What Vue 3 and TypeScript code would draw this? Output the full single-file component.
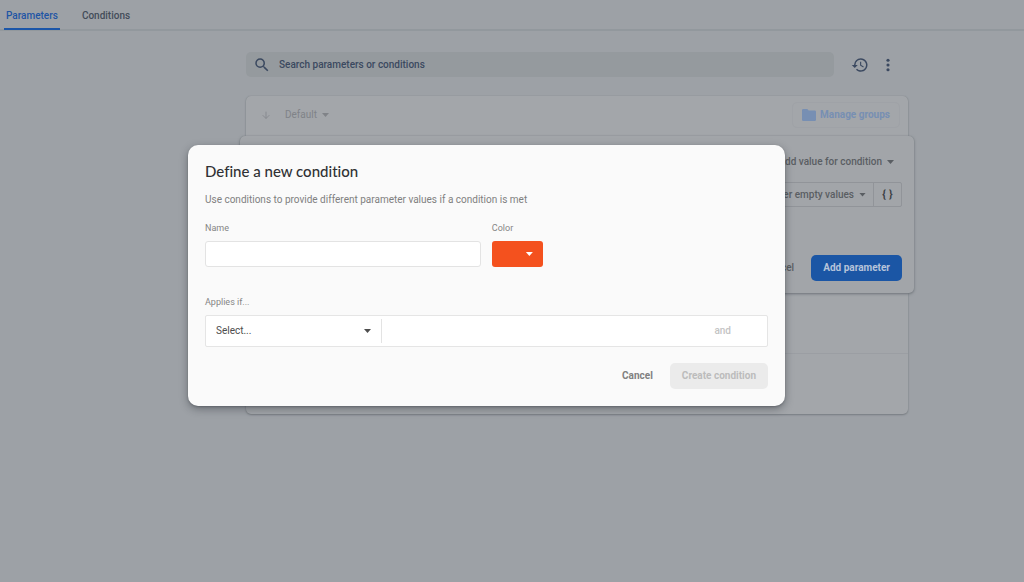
<script setup lang="ts">
import { ref } from 'vue'

const tabs = ['Parameters', 'Conditions']
const activeTab = ref('Parameters')
const search = ref('')
const name = ref('')
const subject = ref('')
</script>

<template>
  <div class="page">
    <nav class="tabs">
      <button
        v-for="tab in tabs"
        :key="tab"
        class="tab"
        :class="{ active: tab === activeTab }"
        type="button"
        @click="activeTab = tab"
      >{{ tab }}</button>
    </nav>

    <main class="content">
      <div class="toolbar">
        <label class="search">
          <svg viewBox="0 0 24 24" width="18" height="18" aria-hidden="true">
            <path d="M15.5 14h-.79l-.28-.27A6.47 6.47 0 0 0 16 9.5 6.5 6.5 0 1 0 9.5 16c1.61 0 3.09-.59 4.23-1.57l.27.28v.79l5 4.99L20.49 19l-4.99-5zm-6 0C7.01 14 5 11.99 5 9.5S7.01 5 9.5 5 14 7.01 14 9.5 11.99 14 9.5 14z" />
          </svg>
          <input v-model="search" type="text" placeholder="Search parameters or conditions" aria-label="Search parameters or conditions" />
        </label>
        <button class="icon-button" type="button" aria-label="History">
          <svg viewBox="0 0 24 24" width="18" height="18" aria-hidden="true">
            <path d="M13 3a9 9 0 0 0-9 9H1l4 4 4-4H6a7 7 0 1 1 2.050 4.950l-1.420 1.420A9 9 0 1 0 13 3zM12.100 7.500v5.200l4.200 2.500.75-1.230-3.450-2.050V7.500z" />
          </svg>
        </button>
        <button class="icon-button" type="button" aria-label="More options">
          <svg viewBox="0 0 24 24" width="18" height="18" aria-hidden="true">
            <circle cx="12" cy="5.700" r="2.100" /><circle cx="12" cy="12" r="2.100" /><circle cx="12" cy="18.300" r="2.100" />
          </svg>
        </button>
      </div>

      <section class="list">
        <header class="list-head">
          <svg class="sort-icon" viewBox="0 0 12 12" width="10" height="10" aria-hidden="true">
            <path d="M6 2v8M2 6.200l4 4 4-4" />
          </svg>
          <button class="plain faded" type="button">Default <span class="caret"></span></button>
          <button class="manage" type="button">
            <svg viewBox="0 0 14 12" width="14" height="12" aria-hidden="true">
              <path d="M1.300 0h4l1.400 1.500h6A1.300 1.300 0 0 1 14 2.800v7.900a1.300 1.300 0 0 1-1.300 1.300H1.300A1.300 1.300 0 0 1 0 10.700V1.300A1.300 1.300 0 0 1 1.300 0z" />
            </svg>
            Manage groups
          </button>
        </header>

        <div class="editor">
          <button class="plain" type="button">Add value for condition <span class="caret"></span></button>
          <div class="value-row">
            <button class="plain" type="button">Other empty values <span class="caret"></span></button>
            <button class="braces" type="button" aria-label="Edit JSON"><span>{</span><span>}</span></button>
          </div>
          <div class="editor-actions">
            <button class="plain" type="button">Cancel</button>
            <button class="primary" type="button">Add parameter</button>
          </div>
        </div>
        <div class="row"></div>
        <div class="row"></div>
      </section>
    </main>

    <div class="overlay">
      <form class="dialog" role="dialog" aria-labelledby="dialog-title" @submit.prevent>
        <h2 id="dialog-title">Define a new condition</h2>
        <p class="hint">Use conditions to provide different parameter values if a condition is met</p>
        <div class="fields">
          <div class="field name-field">
            <label for="condition-name">Name</label>
            <input id="condition-name" v-model="name" type="text" />
          </div>
          <div class="field">
            <label for="condition-color">Color</label>
            <button id="condition-color" class="swatch" type="button"><span class="caret"></span></button>
          </div>
        </div>
        <label class="applies" for="condition-subject">Applies if...</label>
        <div class="rule">
          <div class="select-wrap">
            <select id="condition-subject" v-model="subject">
              <option value="">Select...</option>
            </select>
            <span class="caret"></span>
          </div>
          <button class="and" type="button" disabled>and</button>
        </div>
        <div class="dialog-actions">
          <button class="cancel" type="button">Cancel</button>
          <button class="create" type="submit" disabled>Create condition</button>
        </div>
      </form>
    </div>
  </div>
</template>

<style>
body {
  background: #9da1a6;
}
</style>

<style scoped>
.page {
  min-height: 100vh;
  color: #5a5e63;
  font: 500 10px/14px Roboto, sans-serif;
}
.page *, .page {
  box-sizing: border-box;
}
button, input, select {
  margin: 0;
  padding: 0;
  border: 0;
  background: none;
  color: inherit;
  font: inherit;
  outline: none;
}
svg {
  flex: none;
  fill: currentColor;
}
.caret {
  flex: none;
  width: 7px;
  height: 4px;
  background: currentColor;
  clip-path: polygon(0 0, 100% 0, 50% 100%);
}
.tabs {
  display: flex;
  gap: 20px;
  height: 31px;
  padding: 0 4px;
  border-bottom: 2px solid #92989d;
  color: #434c59;
}
.tab {
  height: 30px;
  padding: 4px 2px 0;
  border-bottom: 2px solid transparent;
}
.tab.active {
  color: #1f55a5;
  border-color: #1c56a8;
}
.content {
  max-width: 908px;
  padding: 21px 0 0 246px;
}
.toolbar {
  display: flex;
  align-items: center;
  gap: 10px;
  padding-right: 11px;
  color: #3b4960;
}
.search {
  display: flex;
  flex: 1;
  align-items: center;
  gap: 8px;
  height: 25px;
  margin-right: 7px;
  padding: 0 7px;
  border-radius: 5px;
  background: #959a9e;
}
.search input {
  flex: 1;
}
.search input::placeholder {
  color: #3b4960;
  opacity: 1;
}
.icon-button {
  display: flex;
  align-items: center;
  justify-content: center;
  width: 18px;
  height: 18px;
}
.list {
  margin-top: 19px;
  border-radius: 5px;
  background: #a3a6aa;
  box-shadow: 0 1px 2px #777c81, 0 0 1px #7c8186;
}
.list-head {
  display: flex;
  align-items: center;
  height: 40px;
  padding: 0 8px 2px 15px;
}
.sort-icon {
  margin-right: 14px;
  fill: none;
  stroke: #83868b;
}
.plain {
  display: inline-flex;
  align-items: center;
  gap: 5px;
}
.faded {
  color: #808388;
  font-weight: 400;
}
.manage {
  display: flex;
  align-items: center;
  gap: 4px;
  height: 26px;
  margin-left: auto;
  padding: 0 9px;
  border: 1px solid #9fa2a7;
  border-radius: 5px;
  color: #778fb3;
  font-weight: 700;
}
.editor {
  display: flex;
  flex-direction: column;
  align-items: flex-end;
  margin: 0 -6px;
  padding: 19px 12px 12px;
  border-radius: 5px;
  background: #a2a5a9;
  box-shadow: 0 1px 3px #6e7379, 0 0 1px #7c8186;
}
.editor > .plain {
  margin-right: 8px;
}
.value-row {
  display: flex;
  width: 100%;
  height: 25px;
  margin-top: 13px;
  border: 1px solid #919499;
  border-radius: 2px;
  justify-content: flex-end;
}
.value-row .plain {
  padding-right: 7px;
}
.braces {
  display: flex;
  align-items: center;
  justify-content: center;
  gap: 3px;
  width: 28px;
  border-left: 1px solid #919499;
  color: #3c4045;
  font-size: 11px;
  font-weight: 700;
}
.editor-actions {
  display: flex;
  gap: 17px;
  margin-top: 48px;
}
.primary {
  height: 26px;
  padding: 0 12px;
  border-radius: 5px;
  background: #1b56a5;
  color: #b6c4da;
  font-weight: 700;
}
.row {
  height: 60px;
}
.row + .row {
  height: 61px;
  border-top: 1px solid #9b9ea3;
}
.overlay {
  position: absolute;
  inset: 0;
  padding: 145px 239px 0 188px;
}
.dialog {
  padding: 16px 17px 17px;
  border-radius: 10px;
  background: #fafafa;
  color: #4d4d4d;
  box-shadow: 0 3px 8px rgb(30 35 42 / 40%), 0 1px 2px rgb(30 35 42 / 25%);
}
h2 {
  margin: 0;
  color: #303134;
  font: 500 15px/20px Lato, sans-serif;
  font-variant-ligatures: none;
}
.hint {
  margin: 12px 0 14px;
  color: #808080;
  font-weight: 400;
}
.fields {
  display: flex;
  gap: 11px;
}
.field {
  display: flex;
  flex-direction: column;
  gap: 6px;
}
.field label, .applies {
  color: #858585;
  font-size: 9px;
  font-weight: 400;
  line-height: 14px;
}
.name-field {
  width: 49%;
}
.field input {
  height: 26px;
  padding: 0 8px;
  border: 1px solid #e3e3e3;
  border-radius: 3px;
  background: #fff;
}
.swatch {
  display: flex;
  align-items: center;
  justify-content: flex-end;
  width: 51px;
  height: 26px;
  padding-right: 10px;
  border-radius: 3px;
  background: #f4511e;
  color: #fff;
}
.applies {
  display: block;
  margin-top: 28px;
}
.rule {
  display: flex;
  align-items: center;
  height: 32px;
  margin-top: 6px;
  border: 1px solid #e5e5e5;
  border-radius: 2px;
  background: #fff;
}
.select-wrap {
  display: flex;
  align-items: center;
  width: 176px;
  height: 24px;
  padding: 0 10px;
  border-right: 1px solid #e3e3e3;
}
.select-wrap select {
  flex: 1;
  appearance: none;
  font-weight: 400;
}
.and {
  margin-left: auto;
  margin-right: 36px;
  color: #c4c4c4;
}
.dialog-actions {
  display: flex;
  align-items: center;
  justify-content: flex-end;
  gap: 17px;
  margin-top: 16px;
}
.cancel {
  color: #808080;
  font-weight: 700;
}
.create {
  height: 26px;
  padding: 0 12px;
  border-radius: 5px;
  background: #ebebeb;
  color: #bcbcbc;
  font-weight: 700;
}
</style>
